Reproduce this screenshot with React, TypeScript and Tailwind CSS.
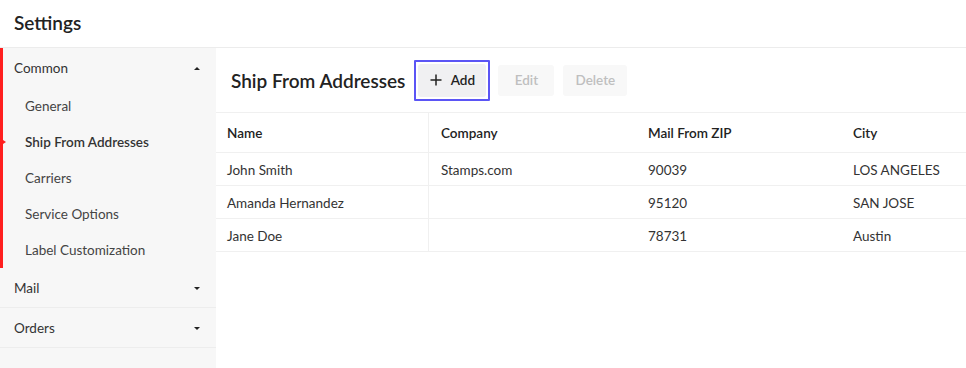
import React from "react";

const Caret = ({ up }: { up?: boolean }) => (
  <svg width="8" height="5" viewBox="0 0 8 5" className="mr-[15px]">
    {up ? <polygon points="1,4 7,4 4,1" fill="#222" /> : <polygon points="1,1 7,1 4,4" fill="#222" />}
  </svg>
);

const rows = [
  ["John Smith", "Stamps.com", "90039", "LOS ANGELES"],
  ["Amanda Hernandez", "", "95120", "SAN JOSE"],
  ["Jane Doe", "", "78731", "Austin"],
];

export default function App() {
  return (
    <div className="w-[966px] h-[368px] bg-white overflow-hidden text-[#2b2b2b]" style={{ fontFamily: "Lato, 'Noto Sans', sans-serif" }}>
      <div className="h-[48px] flex items-center pl-[14px] border-b border-[#ececec]">
        <span className="text-[19px] font-semibold text-[#222]">Settings</span>
      </div>
      <div className="flex h-[320px]">
        <div className="w-[216px] bg-[#f7f7f7] flex flex-col">
          <div className="border-l-[3px] border-[#ff1f1f] relative">
            <div className="h-[40px] flex items-center justify-between pl-[11px] text-[13.5px] text-[#333]">
              <span>Common</span>
              <Caret up />
            </div>
            {["General", "Ship From Addresses", "Carriers", "Service Options", "Label Customization"].map((t) => (
              <div key={t} className={`h-[36px] flex items-center pl-[22px] text-[13.5px] pt-[1px] ${t === "Ship From Addresses" ? "font-semibold text-[#333]" : "text-[#444]"}`}>
                {t}
              </div>
            ))}
            <div className="absolute left-[-3px] top-[90px] w-0 h-0 border-y-[4px] border-y-transparent border-l-[6px] border-l-[#ff1f1f]" />
          </div>
          <div className="h-[40px] flex items-center justify-between pl-[14px] text-[13.5px] text-[#333] border-b border-[#ededed] pt-[2px]">
            <span>Mail</span>
            <Caret />
          </div>
          <div className="h-[40px] flex items-center justify-between pl-[14px] text-[13.5px] text-[#333] border-b border-[#ededed] pt-[1px]">
            <span>Orders</span>
            <Caret />
          </div>
        </div>
        <div className="flex-1 flex flex-col">
          <div className="h-[65px] flex items-center pl-[15px] border-b border-[#f0f0f0]">
            <span className="text-[19px] font-semibold text-[#222] mr-[9px] mt-[2px]">Ship From Addresses</span>
            <div className="border-2 border-[#5b55f5] p-[2px] rounded-[1px]">
              <button className="h-[33px] w-[68px] rounded-[3px] bg-[#f0f0f2] flex items-center justify-center gap-[9px] text-[13.5px] font-semibold text-[#222] pt-[1px]">
                <svg width="12" height="12" viewBox="0 0 12 12" className="-mt-[1px]"><path d="M6 0.5v11M0.5 6h11" stroke="#222" strokeWidth="1.5" /></svg>
                Add
              </button>
            </div>
            <button className="ml-[8px] h-[31px] w-[56px] rounded-[3px] bg-[#f8f8f8] text-[13.5px] font-semibold text-[#bfbfbf] pt-[1px]">Edit</button>
            <button className="ml-[9px] h-[31px] w-[64px] rounded-[3px] bg-[#f8f8f8] text-[13.5px] font-semibold text-[#bfbfbf] pt-[1px]">Delete</button>
          </div>
          <div className="text-[13.5px]">
            <div className="grid grid-cols-[213px_207px_205px_1fr] h-[40px] border-b border-[#f0f0f0] font-semibold text-[#222]">
              <div className="flex items-center pl-[11px] pt-[2px] border-r border-[#f0f0f0]">Name</div>
              <div className="flex items-center pl-[12px] pt-[2px]">Company</div>
              <div className="flex items-center pl-[12px] pt-[2px]">Mail From ZIP</div>
              <div className="flex items-center pl-[12px] pt-[2px]">City</div>
            </div>
            {rows.map((r) => (
              <div key={r[0]} className="grid grid-cols-[213px_207px_205px_1fr] h-[33px] border-b border-[#f0f0f0] text-[#333]">
                <div className="flex items-center pl-[11px] pt-[2px] border-r border-[#f0f0f0]">{r[0]}</div>
                <div className="flex items-center pl-[12px] pt-[2px]">{r[1]}</div>
                <div className="flex items-center pl-[12px] pt-[2px]">{r[2]}</div>
                <div className="flex items-center pl-[12px] pt-[2px]">{r[3]}</div>
              </div>
            ))}
          </div>
        </div>
      </div>
    </div>
  );
}
